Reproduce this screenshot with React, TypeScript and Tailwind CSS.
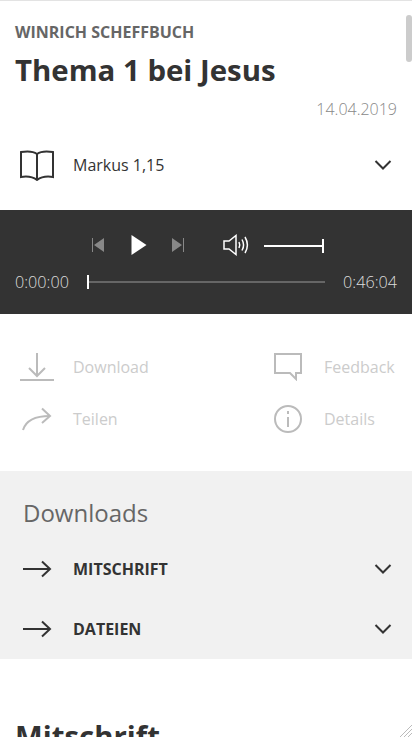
import React from 'react';

function Chevron() {
  return (
    <svg width="18" height="12" viewBox="0 0 18 12" fill="none" stroke="#333" strokeWidth="2">
      <path d="M1.5 2 L9 9.5 L16.5 2" />
    </svg>
  );
}

function ArrowRight() {
  return (
    <svg width="30" height="18" viewBox="0 0 30 18" fill="none" stroke="#333" strokeWidth="2">
      <path d="M1 9 H28" />
      <path d="M20 1.5 L28 9 L20 16.5" />
    </svg>
  );
}

function DownloadRow({ title }: { title: string }) {
  return (
    <div className="flex h-[60px] items-center pl-[22px] pr-[20px]">
      <div className="w-[51px] shrink-0">
        <ArrowRight />
      </div>
      <span className="flex-1 text-[16px] font-bold uppercase text-[#333]">{title}</span>
      <Chevron />
    </div>
  );
}

function ActionItem({ icon, label, className }: { icon: React.ReactNode; label: string; className: string }) {
  return (
    <div className={`flex h-[52px] items-center ${className}`}>
      {icon}
      <span className="text-[16px] text-[#ccc]">{label}</span>
    </div>
  );
}

function App() {
  return (
    <div className="relative h-[737px] w-[412px] overflow-hidden bg-white font-['Open_Sans',sans-serif]">
      <div className="h-px bg-[#e3e3e3]" />

      <div className="px-[15px]">
        <div className="mt-[20px] text-[16px] leading-[22px] font-bold uppercase text-[#666]">Winrich Scheffbuch</div>
        <h1 className="mt-[8px] text-[29.4px] leading-[38px] font-bold text-[#333]">Thema 1 bei Jesus</h1>
        <div className="mt-[9px] text-right text-[16px] leading-[22px] font-light text-[#888]">14.04.2019</div>
      </div>

      <div className="mt-[23px] flex h-[44px] items-center pl-[20px] pr-[20px]">
        <svg width="34" height="32" viewBox="0 0 34 32" fill="none" stroke="#333" strokeWidth="2" className="mr-[19px]">
          <path d="M17 5 C13 2 7 2 1 3 V28 C7 27 13 28 17 31 C21 28 27 27 33 28 V3 C27 2 21 2 17 5 Z" />
          <path d="M17 5 V31" />
        </svg>
        <span className="flex-1 text-[16px] text-[#333]">Markus 1,15</span>
        <Chevron />
      </div>

      <div className="mt-[23px] h-[104px] bg-[#333] px-[15px]">
        <div className="flex h-[43px] items-end pl-[77px]">
          <svg width="12" height="14" viewBox="0 0 12 14" fill="#888" className="mb-[1px]">
            <path d="M0 0 H1 V14 H0 Z M12 0 V14 L2 7 Z" />
          </svg>
          <svg width="16" height="20" viewBox="0 0 16 20" fill="#fff" className="ml-[27px] mb-[-2px]">
            <path d="M0.5 0 L15.5 10 L0.5 20 Z" />
          </svg>
          <svg width="12" height="14" viewBox="0 0 12 14" fill="#888" className="ml-[25px] mb-[1px]">
            <path d="M0 0 L10 7 L0 14 Z M11 0 H12 V14 H11 Z" />
          </svg>
          <svg width="26" height="22" viewBox="0 0 26 22" fill="none" stroke="#fff" strokeWidth="1.5" className="ml-[39px] mb-[-3px]">
            <path d="M1 7 H6 L13 1.5 V20.5 L6 15 H1 Z" />
            <path d="M16 8 C17 10 17 12 16 14" />
            <path d="M19 5.5 C21 9 21 13 19 16.5" />
            <path d="M22 3 C25 8 25 14 22 19" />
          </svg>
          <div className="relative mb-[6px] ml-[15px] h-[2px] w-[60px] bg-white">
            <div className="absolute right-0 top-[-6px] h-[14px] w-[2px] bg-white" />
          </div>
        </div>
        <div className="mt-[18px] flex items-center">
          <span className="w-[72px] text-[16.2px] leading-[22px] font-light text-[#ddd]">0:00:00</span>
          <div className="relative h-[2px] flex-1 bg-[#666]">
            <div className="absolute left-0 top-[-6px] h-[14px] w-[2px] bg-white" />
          </div>
          <span className="w-[72px] text-right text-[16.2px] leading-[22px] font-light text-[#ddd]">0:46:04</span>
        </div>
      </div>

      <div className="mt-[27px] grid h-[104px] grid-cols-[274px_1fr] content-start">
        <ActionItem
          className="pl-[20px]"
          label="Download"
          icon={
            <svg width="34" height="28" viewBox="0 0 34 28" fill="none" stroke="#bbb" strokeWidth="2" className="mr-[19px]">
              <path d="M17 0 V23" />
              <path d="M9 15 L17 23 L25 15" />
              <path d="M0 27 H34" />
            </svg>
          }
        />
        <ActionItem
          className=""
          label="Feedback"
          icon={
            <svg width="28" height="28" viewBox="0 0 28 28" fill="none" stroke="#bbb" strokeWidth="2" className="mr-[22px]">
              <path d="M1 1 H27 V20 H22 V26 L16 20 H1 Z" />
            </svg>
          }
        />
        <ActionItem
          className="pl-[22px]"
          label="Teilen"
          icon={
            <svg width="30" height="24" viewBox="0 0 30 24" fill="none" stroke="#bbb" strokeWidth="2" className="mr-[21px]">
              <path d="M1 23 C4 13 13 9 28 9" />
              <path d="M20 1.5 L28 9 L20 16" />
            </svg>
          }
        />
        <ActionItem
          className=""
          label="Details"
          icon={
            <svg width="28" height="28" viewBox="0 0 28 28" fill="none" stroke="#bbb" strokeWidth="2" className="mr-[22px]">
              <circle cx="14" cy="14" r="13" />
              <path d="M14 12 V22" />
              <path d="M14 6 V9" />
            </svg>
          }
        />
      </div>

      <div className="mt-[26px] h-[188px] bg-[#f1f1f1]">
        <h2 className="pl-[23px] pt-[25px] text-[24px] leading-[33px] text-[#666]">Downloads</h2>
        <div className="mt-[10px]">
          <DownloadRow title="Mitschrift" />
          <DownloadRow title="Dateien" />
        </div>
      </div>

      <h2 className="mt-[58px] pl-[15px] text-[29.4px] leading-[38px] font-bold text-[#333]">Mitschrift</h2>

      {/* scrollbar thumb */}
      <div className="absolute right-0 top-[15px] h-[47px] w-[6px] rounded-[3px] bg-[#ccc]" />

      {/* resize handle */}
      <svg width="12" height="12" viewBox="0 0 12 12" stroke="#bbb" strokeWidth="1" className="absolute bottom-0 right-0">
        <path d="M0 12 L12 0 M4 12 L12 4 M8 12 L12 8" />
      </svg>
    </div>
  );
}

export default App;
